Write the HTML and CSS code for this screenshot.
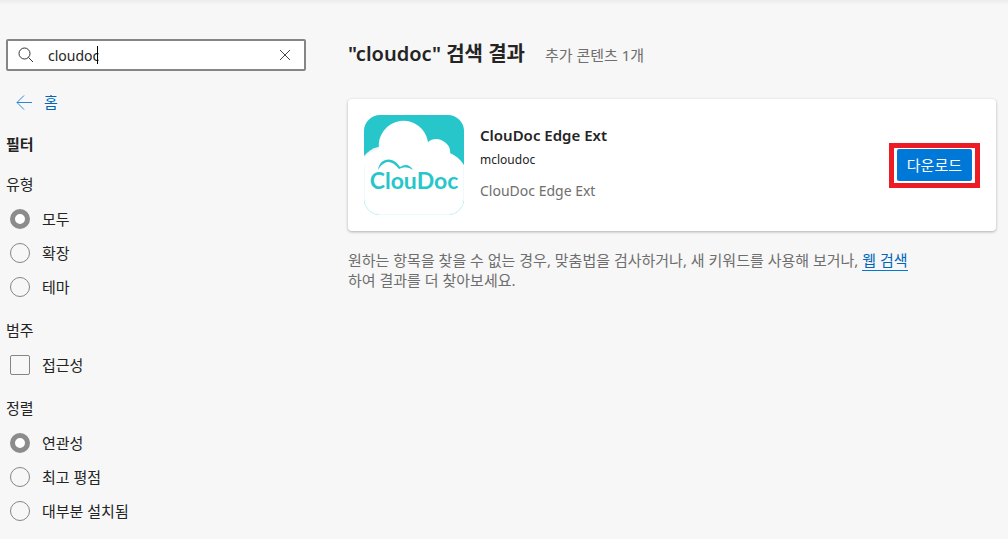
FILE: index.html
```html
<!DOCTYPE html>
<html lang="ko">

<head>
    <meta charset="UTF-8">
    <meta name="viewport" content="width=device-width, initial-scale=1.0">
    <title>"cloudoc" 검색 결과</title>
    <link rel="stylesheet" href="styles.css">
</head>

<body>
    <div class="page">
        <aside class="sidebar">
            <form class="search" role="search">
                <svg class="search-icon" viewBox="0 0 16 16" aria-hidden="true">
                    <circle cx="6.5" cy="6.5" r="5.5" />
                    <path d="M10.5 10.5l4.5 4.5" />
                </svg>
                <div class="search-field">
                    <input class="search-input" type="text" value="cloudoc" aria-label="검색">
                    <span class="caret"></span>
                </div>
                <button class="search-clear" type="button" aria-label="지우기">
                    <svg viewBox="0 0 12 12" aria-hidden="true"><path d="M1 1l10 10M11 1L1 11" /></svg>
                </button>
            </form>

            <a class="home" href="#">
                <svg viewBox="0 0 16 16" aria-hidden="true"><path d="M16 8.5H1M8 1.5l-7 7 7 7" /></svg>
                <span>홈</span>
            </a>

            <h2 class="filter-title">필터</h2>

            <fieldset class="filter">
                <legend>유형</legend>
                <label><input type="radio" name="type" checked><span>모두</span></label>
                <label><input type="radio" name="type"><span>확장</span></label>
                <label><input type="radio" name="type"><span>테마</span></label>
            </fieldset>

            <fieldset class="filter">
                <legend>범주</legend>
                <label><input type="checkbox" name="category"><span>접근성</span></label>
            </fieldset>

            <fieldset class="filter">
                <legend>정렬</legend>
                <label><input type="radio" name="sort" checked><span>연관성</span></label>
                <label><input type="radio" name="sort"><span>최고 평점</span></label>
                <label><input type="radio" name="sort"><span>대부분 설치됨</span></label>
            </fieldset>
        </aside>

        <main class="results">
            <header class="results-header">
                <h1>"cloudoc" 검색 결과</h1>
                <span class="count">추가 콘텐츠 1개</span>
            </header>

            <article class="card">
                <svg class="logo" viewBox="0 0 100 100" role="img" aria-label="ClouDoc">
                    <defs>
                        <clipPath id="logo-clip"><rect width="100" height="100" rx="16" /></clipPath>
                    </defs>
                    <g clip-path="url(#logo-clip)">
                        <rect width="100" height="100" fill="#26c6cb" />
                        <path d="M0 41Q6 34 14 32L18 31L22 60H0Z" fill="#eef3f3" />
                        <path d="M78 27C84 28 87 33 86 40L76 42Z" fill="#eef3f3" />
                        <path d="M0 43Q6 36 15 34A24.5 24.5 0 1 1 64 27C72 20 86 26 86 38Q95 42 100 50V100H0Z" fill="#fff" />
                    </g>
                    <path d="M.5 50V84A15.5 15.5 0 0 0 16 99.5H84A15.5 15.5 0 0 0 99.5 84V50" stroke="#26c6cb" stroke-opacity=".08" />
                    <path d="M14 55C15 46 22 43 28 45Q33 47 36 52Q44 47 49 55Q42 50 35 54Q29 46 23 47Q17 49 14 55Z" fill="#26c6cb" />
                    <text class="logo-text" x="50" y="74" text-anchor="middle">ClouDoc</text>
                </svg>
                <div class="card-info">
                    <h3>ClouDoc Edge Ext</h3>
                    <p class="publisher">mcloudoc</p>
                    <p class="summary">ClouDoc Edge Ext</p>
                </div>
                <div class="highlight">
                    <button class="download" type="button">다운로드</button>
                </div>
            </article>

            <p class="hint">원하는 항목을 찾을 수 없는 경우, 맞춤법을 검사하거나, 새 키워드를 사용해 보거나, <a href="#">웹 검색</a>하여 결과를 더 찾아보세요.</p>
        </main>
    </div>
</body>

</html>
```

FILE: styles.css
```css
* {
    box-sizing: border-box;
}

body {
    margin: 0;
    font-family: "Noto Sans", "Noto Sans CJK KR", sans-serif;
    font-size: 15px;
    line-height: 20px;
    color: #242424;
    background: #f7f7f7 linear-gradient(#ebebeb, #f7f7f7) no-repeat 0 0 / 100% 5px;
}

h1, h2, h3, p {
    margin: 0;
}

input, button {
    font: inherit;
    color: inherit;
}

svg {
    display: block;
    fill: none;
    flex-shrink: 0;
}

.page {
    display: flex;
    gap: 42px;
    padding: 39px 12px 10px 6px;
}

.sidebar {
    flex: 0 0 300px;
}

/* search box */
.search {
    display: flex;
    align-items: center;
    height: 32px;
    padding: 0 9px 0 10px;
    border: 2px solid #858585;
    border-radius: 2px;
    background: #fff;
}

.search-icon {
    width: 16px;
    height: 16px;
    stroke: #333;
}

.search-field {
    position: relative;
    flex: 1;
    padding-left: 14px;
}

.search-input {
    display: block;
    width: 100%;
    height: 24px;
    padding: 0;
    border: 0;
    outline: 0;
    background: none;
    font-size: 14px;
}

.caret {
    position: absolute;
    top: 3px;
    left: 63px;
    width: 1px;
    height: 18px;
    background: #000;
}

.search-clear {
    padding: 4px;
    border: 0;
    background: none;
}

.search-clear svg {
    width: 12px;
    height: 12px;
    stroke: #444;
}

.home {
    display: flex;
    align-items: center;
    gap: 12px;
    margin: 21px 0 22px 10px;
    color: #0067b8;
    text-decoration: none;
}

.home svg {
    width: 16px;
    height: 16px;
    stroke: #2b88d8;
}

.filter-title {
    margin-bottom: 20px;
    font-size: 15px;
    font-weight: 600;
}

/* filters */
.filter {
    margin: 0 0 16px;
    padding: 0;
    border: 0;
}

.filter legend {
    padding: 0 0 8px;
}

.filter label {
    display: flex;
    align-items: center;
    gap: 12px;
    height: 34px;
    padding-left: 4px;
}

.filter input {
    appearance: none;
    width: 20px;
    height: 20px;
    margin: 0;
    border: 1px solid #858585;
    border-radius: 2px;
}

.filter input[type="radio"] {
    border-radius: 50%;
}

.filter input:checked {
    border: 5px solid #8c8c8c;
    background: #fff;
}

/* results */
.results {
    flex: 1;
    min-width: 0;
}

.results-header {
    display: flex;
    align-items: baseline;
    gap: 20px;
    margin-bottom: 30px;
}

.results-header h1 {
    font-size: 20px;
    font-weight: 600;
    line-height: 30px;
}

.count, .summary, .hint {
    color: #6e6e6e;
}

.card {
    display: flex;
    align-items: center;
    gap: 16px;
    padding: 16px;
    border-radius: 4px;
    background: #fff;
    box-shadow: 0 1px 3px rgba(0, 0, 0, .3);
}

.logo {
    width: 100px;
    height: 100px;
}

.logo-text {
    font-family: Lato, sans-serif;
    font-size: 23px;
    font-weight: 700;
    fill: #26c6cb;
}

.card-info {
    flex: 1;
    align-self: flex-start;
    padding-top: 10px;
}

.card-info h3 {
    font-size: 15px;
    font-weight: 600;
}

.publisher {
    margin: 5px 0 11px;
    font-size: 12px;
}

.summary {
    font-size: 14px;
}

.highlight {
    padding: 1px 3px 2px;
    border: 5px solid #ed1c24;
}

.download {
    display: block;
    height: 32px;
    padding: 0 10px;
    border: 0;
    border-radius: 2px;
    color: #fff;
    background: #0078d7;
}

.hint {
    max-width: 570px;
    margin-top: 19px;
}

.hint a {
    border-bottom: 1px solid #0078d7;
    color: #0067b8;
    text-decoration: none;
}
```
